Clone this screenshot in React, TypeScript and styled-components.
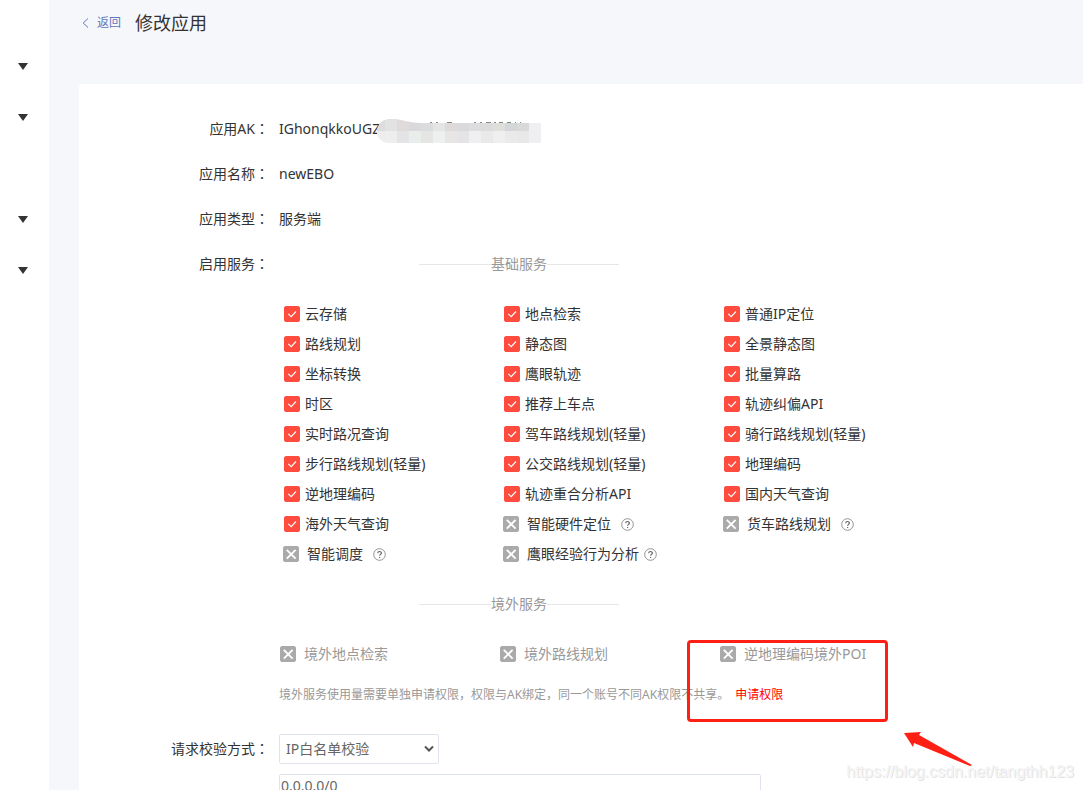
import React, { useState } from "react";
import styled, { createGlobalStyle } from "styled-components";

const GlobalStyle = createGlobalStyle`
  *, *::before, *::after { box-sizing: border-box; }
  body {
    margin: 0;
    background: #f6f7fb;
    color: #333;
    font-family: "Noto Sans", "Noto Sans CJK SC", sans-serif;
    font-size: 14px;
    line-height: 20px;
  }
`;

const Page = styled.div`
  position: relative;
  display: flex;
  height: 100vh;
  overflow: hidden;
`;

const Sidebar = styled.nav`
  flex: 0 0 49px;
  display: flex;
  flex-direction: column;
  align-items: center;
  padding: 41px 0 0;
  background: #fff;
`;

const MenuToggle = styled.button<{ $spaced?: boolean }>`
  display: grid;
  place-items: center;
  width: 45px;
  height: 51px;
  margin: ${(p) => (p.$spaced ? "51px 0 0" : "0")};
  margin-right: 4px;
  padding: 0;
  border: 0;
  background: none;
`;

const Main = styled.main`
  flex: 1;
  display: flex;
  flex-direction: column;
  min-width: 0;
  padding-left: 30px;
`;

const Header = styled.header`
  flex: none;
  display: flex;
  align-items: center;
  height: 84px;
  padding: 0 3px 38px;
`;

const BackLink = styled.a`
  display: flex;
  align-items: center;
  gap: 8px;
  margin-right: 14px;
  color: #5f78bd;
  font-size: 12px;
  line-height: 22px;
  text-decoration: none;
`;

const Title = styled.h1`
  margin: 0;
  font-size: 18px;
  font-weight: 400;
  line-height: 24px;
`;

const Card = styled.form`
  flex: 1 0 auto;
  display: flex;
  flex-direction: column;
  gap: 25px;
  padding-top: 35px;
  border-radius: 4px 0 0 0;
  background: #fff;
`;

const Field = styled.div`
  display: flex;
  gap: 10px;
`;

const FieldLabel = styled.label`
  flex: 0 0 190px;
  text-align: right;
`;

const Colon = styled.span`
  font-family: "Noto Sans CJK TC", sans-serif;
  line-height: 0;
`;

const FieldBody = styled.div`
  position: relative;
  flex: 1;
  min-width: 0;
`;

const Mosaic = styled.svg`
  position: absolute;
  left: 98px;
  top: 0;
`;

const Divider = styled.h2`
  display: flex;
  align-items: center;
  width: 480px;
  margin: 0;
  padding: 0 140px;
  color: #999;
  font-size: 14px;
  font-weight: 400;
  line-height: 20px;
  white-space: nowrap;

  &::before, &::after {
    content: "";
    flex: 1;
    height: 1px;
    background: #e6e6e6;
  }
`;

const ServiceGrid = styled.div`
  display: grid;
  grid-template-columns: repeat(3, 220px);
  grid-auto-rows: 30px;
  margin: 25px 0;
`;

const OverseasGrid = styled(ServiceGrid)`
  margin-bottom: 16px;
  color: #999;
`;

const Service = styled.div<{ $indent: number }>`
  position: relative;
  display: flex;
  align-items: center;
  padding-left: ${(p) => p.$indent}px;
  white-space: nowrap;
`;

const ServiceLabel = styled.label<{ $gap: number }>`
  display: flex;
  align-items: center;
  gap: ${(p) => p.$gap}px;
`;

const BoxWrap = styled.span`
  display: grid;
  width: 16px;
  height: 16px;

  & > * { grid-area: 1 / 1; }
  svg { pointer-events: none; }
`;

const BoxInput = styled.input`
  appearance: none;
  width: 16px;
  height: 16px;
  margin: 0;
  border: 1px solid #ccc;
  border-radius: 2px;
  background: #fff;

  &:checked { border-color: #ff4c3f; background: #ff4c3f; }
  &:disabled { border-color: #aaa; background: #aaa; }
`;

const HelpButton = styled.button<{ $tight?: boolean }>`
  display: flex;
  margin: 0 0 0 ${(p) => (p.$tight ? 5 : 10)}px;
  padding: 0;
  border: 0;
  background: none;
`;

const Note = styled.p`
  margin: 0;
  color: #999;
  font-size: 12px;
`;

const ApplyLink = styled.a`
  margin-left: 6px;
  color: #f00;
  text-decoration: none;
`;

const VerifyField = styled(Field)`
  margin-top: 4px;
  line-height: 30px;
`;

const SelectWrap = styled.div`
  position: relative;
  width: 160px;

  svg { position: absolute; right: 5px; top: 11px; pointer-events: none; }
`;

const Select = styled.select`
  display: block;
  appearance: none;
  width: 100%;
  height: 30px;
  padding: 0 6px;
  border: 1px solid #dfe3ee;
  border-radius: 2px;
  background: #fff;
  color: #666;
  font: inherit;
  line-height: 28px;
`;

const Whitelist = styled.textarea`
  display: block;
  width: 482px;
  height: 100px;
  margin-top: 10px;
  padding: 1px;
  border: 1px solid #dfe3ee;
  border-radius: 2px;
  color: #666;
  font: inherit;
  line-height: 20px;
  resize: none;
`;

const Highlight = styled.div`
  position: absolute;
  left: -32px;
  top: 1px;
  width: 201px;
  height: 82px;
  border: 3px solid #ff2015;
  border-radius: 4px;
  pointer-events: none;
`;

const Arrow = styled.svg`
  position: absolute;
  left: 185px;
  top: 93px;
  pointer-events: none;
`;

const Watermark = styled.div`
  position: absolute;
  right: 9px;
  bottom: 8px;
  color: #f4f4f4;
  font-family: "Liberation Sans", sans-serif;
  font-size: 16px;
  text-shadow: 1px 1px 0 #e4e4e4;
  pointer-events: none;
`;

type Item = { name: string; off?: boolean; help?: boolean; tight?: boolean };

const basic: Item[] = [
  { name: "云存储" }, { name: "地点检索" }, { name: "普通IP定位" },
  { name: "路线规划" }, { name: "静态图" }, { name: "全景静态图" },
  { name: "坐标转换" }, { name: "鹰眼轨迹" }, { name: "批量算路" },
  { name: "时区" }, { name: "推荐上车点" }, { name: "轨迹纠偏API" },
  { name: "实时路况查询" }, { name: "驾车路线规划(轻量)" }, { name: "骑行路线规划(轻量)" },
  { name: "步行路线规划(轻量)" }, { name: "公交路线规划(轻量)" }, { name: "地理编码" },
  { name: "逆地理编码" }, { name: "轨迹重合分析API" }, { name: "国内天气查询" },
  { name: "海外天气查询" },
  { name: "智能硬件定位", off: true, help: true },
  { name: "货车路线规划", off: true, help: true },
  { name: "智能调度", off: true, help: true },
  { name: "鹰眼经验行为分析", off: true, help: true, tight: true },
];

const overseas = ["境外地点检索", "境外路线规划", "逆地理编码境外POI"];

function CheckBox({ off }: { off?: boolean }) {
  const [on, setOn] = useState(!off);
  return (
    <BoxWrap>
      <BoxInput type="checkbox" checked={on} disabled={off} onChange={(e) => setOn(e.target.checked)} />
      <svg width="16" height="16" fill="none" stroke="#fff">
        {off ? <path d="M3.8 3.8l8.8 8.8M12.6 3.8l-8.8 8.8" strokeWidth="1.9" /> : on && <path d="M4.3 7.8l2.9 2.8 4.8-5.1" strokeWidth="1.1" />}
      </svg>
    </BoxWrap>
  );
}

function Help() {
  return (
    <svg width="13" height="13" fill="none" stroke="#888">
      <circle cx="6.5" cy="6.5" r="5.8" strokeWidth="0.9" />
      <path d="M4.7 5.3c0-2.4 3.7-2.3 3.7-.2 0 1.3-1.8 1.3-1.8 2.7M6.6 8.9v1.2" stroke="#666" strokeWidth="1.2" />
    </svg>
  );
}

function Label({ text, htmlFor }: { text: string; htmlFor?: string }) {
  return (
    <FieldLabel as={htmlFor ? "label" : "span"} htmlFor={htmlFor}>
      {text}<Colon>：</Colon>
    </FieldLabel>
  );
}

const tilesTop = ["#dcdcdc", "#e2e2e2", "#e0dada", "#d9d9dc", "#dadcdd", "#e4e6e5", "#dedada", "#dadadd", "#dddde0", "#dcdcdf", "#dedfdb", "#d4d7d7", "#d9d9d9", "#efeff2"];
const tilesBottom = ["#ededed", "#eeeeee", "#e4e3e5", "#e9edec", "#e5e5e3", "#edf0ef", "#e7e6e5", "#e4e3e5", "#efeff1", "#e9e9ea", "#efeff0", "#eaeaea", "#e8e8e9", "#efeff2"];

export default function App() {
  return (
    <Page>
      <GlobalStyle />
      <Sidebar aria-label="菜单">
        {[false, false, true, false].map((spaced, i) => (
          <MenuToggle key={i} $spaced={spaced} type="button" aria-label="展开">
            <svg width="10" height="7" fill="#333"><path d="M0 0h10L5 7z" /></svg>
          </MenuToggle>
        ))}
      </Sidebar>
      <Main>
        <Header>
          <BackLink href="#">
            <svg width="7" height="10" fill="none" stroke="#5f78bd"><path d="M6 .5L1.2 5 6 9.5" /></svg>
            返回
          </BackLink>
          <Title>修改应用</Title>
        </Header>
        <Card>
          <Field>
            <Label text="应用AK" />
            <FieldBody>
              IGhonqkkoUGZ
              <Mosaic width="164" height="24">
                <clipPath id="smudge"><path d="M11 0C22 -1 26 3 44 4H164V24H12C-4 23-4 3 11 0z" /></clipPath>
                <g clipPath="url(#smudge)">
                  {tilesTop.map((c, i) => <rect key={i} x={i * 12 - 4} y="0" width="12" height="12" fill={c} />)}
                  {tilesBottom.map((c, i) => <rect key={i} x={i * 12 - 4} y="12" width="12" height="12" fill={c} />)}
                </g>
                <path d="M53 3.5h2M59 3.5h2M70 3.5h5M97 3.5h2M103 3.5h2M109 3.5h5M117 3.5h2M122 3.5h4M130 3.5h4M138 3.5h1M143 3.5h1" stroke="#888" />
              </Mosaic>
            </FieldBody>
          </Field>
          <Field>
            <Label text="应用名称" />
            <FieldBody>newEBO</FieldBody>
          </Field>
          <Field>
            <Label text="应用类型" />
            <FieldBody>服务端</FieldBody>
          </Field>
          <Field>
            <Label text="启用服务" />
            <FieldBody>
              <Divider>基础服务</Divider>
              <ServiceGrid>
                {basic.map((s) => (
                  <Service key={s.name} $indent={s.off ? 4 : 5}>
                    <ServiceLabel $gap={s.off ? 8 : 5}><CheckBox off={s.off} />{s.name}</ServiceLabel>
                    {s.help && <HelpButton $tight={s.tight} type="button" aria-label="说明"><Help /></HelpButton>}
                  </Service>
                ))}
              </ServiceGrid>
              <Divider>境外服务</Divider>
              <OverseasGrid>
                {overseas.map((name, i) => (
                  <Service key={name} $indent={1}>
                    <ServiceLabel $gap={8}><CheckBox off />{name}</ServiceLabel>
                    {i === 2 && (
                      <>
                        <Highlight />
                        <Arrow width="70" height="36"><path d="M0 1L17 0 15 3 68 33 66 34 10 11 9 15z" fill="#ff2015" /></Arrow>
                      </>
                    )}
                  </Service>
                ))}
              </OverseasGrid>
              <Note>
                境外服务使用量需要单独申请权限，权限与AK绑定，同一个账号不同AK权限不共享。
                <ApplyLink href="#">申请权限</ApplyLink>
              </Note>
            </FieldBody>
          </Field>
          <VerifyField>
            <Label text="请求校验方式" htmlFor="verify" />
            <FieldBody>
              <SelectWrap>
                <Select id="verify"><option>IP白名单校验</option></Select>
                <svg width="10" height="8" fill="none" stroke="#555" strokeWidth="2"><path d="M1 1.5l4 4 4-4" /></svg>
              </SelectWrap>
              <Whitelist aria-label="IP白名单" defaultValue="0.0.0.0/0" />
            </FieldBody>
          </VerifyField>
        </Card>
      </Main>
      <Watermark>https://blog.csdn.net/tangthh123</Watermark>
    </Page>
  );
}
